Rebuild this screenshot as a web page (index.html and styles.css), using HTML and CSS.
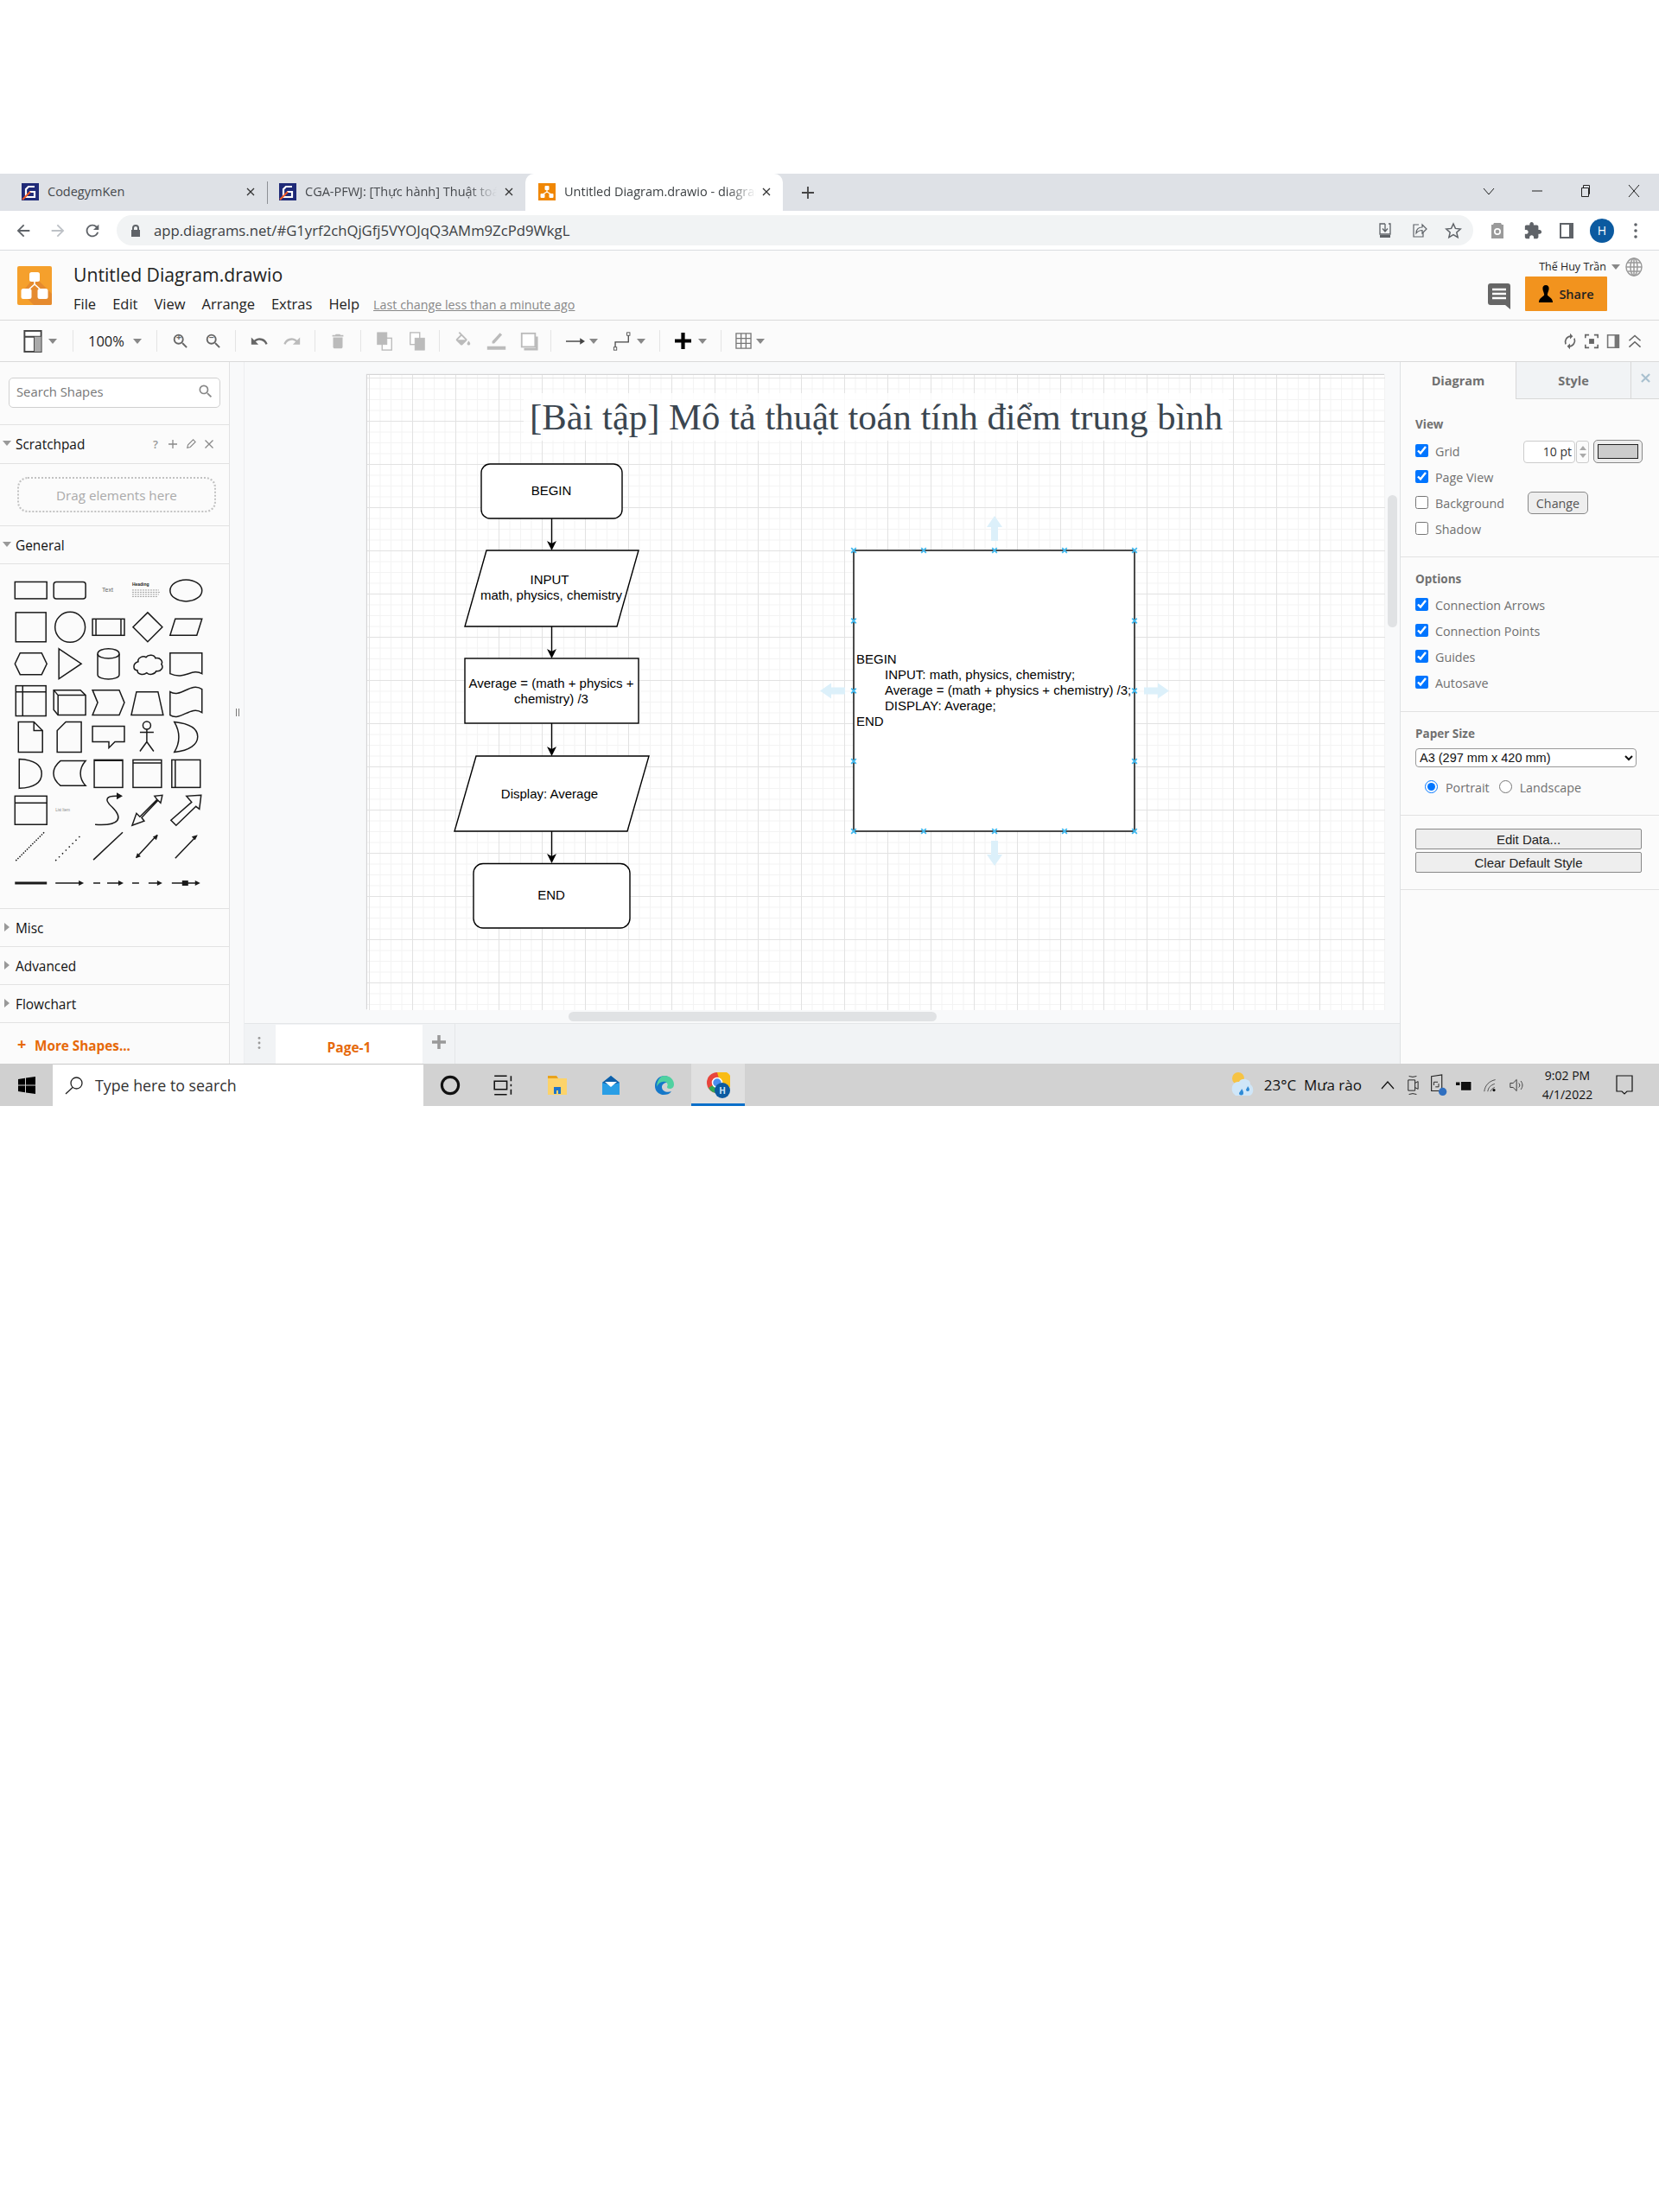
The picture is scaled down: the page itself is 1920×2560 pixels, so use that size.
FILE: index.html
```html
<!DOCTYPE html>
<html lang="vi">
<head>
<meta charset="utf-8">
<title>Untitled Diagram.drawio</title>
<link rel="stylesheet" href="styles.css">
</head>
<body>
<svg class="defs" width="0" height="0">
  <symbol id="i-zoom" viewBox="0 0 24 24"><path d="M15.5 14h-.79l-.28-.27A6.47 6.47 0 0 0 16 9.5 6.5 6.5 0 1 0 9.5 16c1.61 0 3.09-.59 4.23-1.57l.27.28v.79l5 4.99L20.49 19l-4.99-5zm-6 0C7.01 14 5 11.99 5 9.5S7.01 5 9.5 5 14 7.01 14 9.5 11.99 14 9.5 14z"/></symbol>
  <symbol id="i-undo" viewBox="0 0 24 24"><path d="M12.5 8c-2.65 0-5.05.99-6.9 2.6L2 7v9h9l-3.62-3.62c1.39-1.16 3.16-1.88 5.12-1.88 3.54 0 6.55 2.31 7.6 5.5l2.37-.78C21.08 11.03 17.15 8 12.5 8z"/></symbol>
  <symbol id="i-caret" viewBox="0 0 10 6"><path d="M0 0h10L5 6z"/></symbol>
  <symbol id="i-check-x" viewBox="0 0 10 10"><path d="M1.500 1.500l7 7M8.500 1.500l-7 7" stroke="#3fb8ee" stroke-width="2.200" fill="none"/></symbol>
</svg>

<div class="frame">
  <div class="tabstrip">
    <div class="tab">
      <svg class="favicon" viewBox="0 0 20 20"><rect width="20" height="20" fill="#1f2a78"/><path d="M15 4H8L5 7v9h10v-6H9" fill="none" stroke="#fff" stroke-width="2.200"/><path d="M1 19L10 10" stroke="#f05a28" stroke-width="2"/></svg>
      <span class="tab-title">CodegymKen</span>
      <svg class="tab-x" viewBox="0 0 10 10"><path d="M1 1l8 8M9 1l-8 8"/></svg>
    </div>
    <div class="tab tab-sep">
      <svg class="favicon" viewBox="0 0 20 20"><rect width="20" height="20" fill="#1f2a78"/><path d="M15 4H8L5 7v9h10v-6H9" fill="none" stroke="#fff" stroke-width="2.200"/><path d="M1 19L10 10" stroke="#f05a28" stroke-width="2"/></svg>
      <span class="tab-title fade">CGA-PFWJ: [Thực hành] Thuật toán tính điểm</span>
      <svg class="tab-x" viewBox="0 0 10 10"><path d="M1 1l8 8M9 1l-8 8"/></svg>
    </div>
    <div class="tab tab-active">
      <svg class="favicon" viewBox="0 0 20 20"><rect width="20" height="20" fill="#f08705"/><path d="M10 7v3M10 10L5 13M10 10l5 3" stroke="#fff" stroke-width="1.200"/><rect x="7.500" y="3" width="5" height="5" rx="1" fill="#fff"/><rect x="2.500" y="12" width="5" height="5" rx="1" fill="#fff"/><rect x="12.500" y="12" width="5" height="5" rx="1" fill="#fff"/></svg>
      <span class="tab-title fade">Untitled Diagram.drawio - diagrams.net</span>
      <svg class="tab-x" viewBox="0 0 10 10"><path d="M1 1l8 8M9 1l-8 8"/></svg>
    </div>
    <svg class="tab-plus" viewBox="0 0 14 14"><path d="M7 0v14M0 7h14"/></svg>
    <div class="win-controls">
      <svg viewBox="0 0 14 14"><path d="M1 4l6 7 6-7"/></svg>
      <svg viewBox="0 0 14 14"><path d="M1 7h12"/></svg>
      <svg viewBox="0 0 14 14"><path d="M2.500 3.500h8v10h-8zM4.500 3.500v-3h7v10h-1"/></svg>
      <svg viewBox="0 0 14 14"><path d="M1 0l12 14M13 0L1 14"/></svg>
    </div>
  </div>

  <div class="addressbar">
    <div class="nav-btns">
      <svg class="nav" viewBox="0 0 24 24"><path d="M20 11H7.830l5.590-5.590L12 4l-8 8 8 8 1.410-1.410L7.830 13H20v-2z"/></svg>
      <svg class="nav nav-off" viewBox="0 0 24 24"><path d="M4 11h12.170l-5.590-5.590L12 4l8 8-8 8-1.410-1.410L16.170 13H4v-2z"/></svg>
      <svg class="nav" viewBox="0 0 24 24"><path d="M17.650 6.350A7.958 7.958 0 0 0 12 4c-4.420 0-7.990 3.580-7.990 8s3.570 8 7.990 8c3.730 0 6.840-2.550 7.730-6h-2.080A5.990 5.990 0 0 1 12 18c-3.310 0-6-2.690-6-6s2.690-6 6-6c1.660 0 3.140.690 4.220 1.780L13 11h7V4l-2.350 2.350z"/></svg>
    </div>
    <div class="omnibox">
      <svg class="lock" viewBox="0 0 12 14"><path d="M2 6V4a4 4 0 0 1 8 0v2h1v8H1V6zm2 0h4V4a2 2 0 0 0-4 0z"/></svg>
      <span class="url">app.diagrams.net/#G1yrf2chQjGfj5VYOJqQ3AMm9ZcPd9WkgL</span>
      <div class="omni-icons">
        <svg viewBox="0 0 20 20"><path d="M5 2h4M13 2h2v12H3V2h2M9 2v8M6 7.500l3 3.500 3-3.500" fill="none" stroke="#5f6368" stroke-width="1.300"/><path d="M3 15h12v3H3z" fill="#5f6368"/></svg>
        <svg viewBox="0 0 20 20"><path d="M9 3H3v14h11v-5M6 13c0-5 3-7 7-7V3l5 5-5 5V9.500c-3 0-5 1-7 3.500z" fill="none" stroke="#5f6368" stroke-width="1.200"/></svg>
        <svg viewBox="0 0 20 20"><path d="M10 2l2.400 5.400 5.800.6-4.400 3.900 1.300 5.700-5.100-3-5.100 3 1.300-5.700L1.800 8l5.800-.6z" fill="none" stroke="#5f6368" stroke-width="1.500"/></svg>
      </div>
    </div>
    <div class="ext-icons">
      <svg class="ext-cam" viewBox="0 0 20 20"><path d="M6 1h8l1 2h2v16H3V3h2z" fill="#9a9a9a"/><circle cx="10" cy="11" r="4" fill="#fff"/><circle cx="10" cy="11" r="2.300" fill="#9a9a9a"/></svg>
      <svg class="ext-puzzle" viewBox="0 0 24 24"><path d="M20.500 11H19V7c0-1.100-.9-2-2-2h-4V3.500C13 2.120 11.880 1 10.500 1S8 2.120 8 3.500V5H4c-1.100 0-1.990.9-1.990 2v3.800H3.500c1.490 0 2.700 1.210 2.700 2.700s-1.210 2.700-2.700 2.700H2V20c0 1.100.9 2 2 2h3.800v-1.500c0-1.490 1.210-2.700 2.700-2.700 1.490 0 2.700 1.210 2.700 2.700V22H17c1.100 0 2-.9 2-2v-4h1.500c1.380 0 2.500-1.120 2.500-2.500S21.880 11 20.500 11z"/></svg>
      <svg class="ext-panel" viewBox="0 0 18 20"><path d="M1 1h16v18H1zM3 3v14h9V3z" fill-rule="evenodd"/></svg>
      <span class="avatar">H</span>
      <svg class="ext-dots" viewBox="0 0 4 20"><circle cx="2" cy="3" r="1.800"/><circle cx="2" cy="10" r="1.800"/><circle cx="2" cy="17" r="1.800"/></svg>
    </div>
  </div>

  <header class="app-header">
    <svg class="logo" viewBox="0 0 40 45"><rect width="40" height="45" rx="2" fill="#f5a02c"/><path d="M40 43a2 2 0 0 1-2 2H19L5 31l12-15 6-1 17 17z" fill="#e58a2e"/><path d="M20 12v9M20 21l-10 9M20 21l10 9" stroke="#fff" stroke-width="1.600" fill="none"/><rect x="14" y="7" width="12" height="11" rx="2.500" fill="#fff"/><rect x="4.500" y="26" width="12" height="12" rx="2.500" fill="#fff"/><rect x="23.500" y="26" width="12" height="12" rx="2.500" fill="#fff"/></svg>
    <div class="title-block">
      <div class="doc-title">Untitled Diagram.drawio</div>
      <nav class="menu"><span>File</span><span>Edit</span><span>View</span><span>Arrange</span><span>Extras</span><span>Help</span><a class="last-change">Last change less than a minute ago</a></nav>
    </div>
    <div class="user-block">
      <div class="user-row">
        <span class="user-name">Thế Huy Trần</span>
        <svg class="caret user-caret"><use href="#i-caret"/></svg>
        <svg class="globe" viewBox="0 0 20 22"><g fill="none" stroke="#9a9a9a" stroke-width="1.500"><ellipse cx="10" cy="11" rx="9" ry="10"/><ellipse cx="10" cy="11" rx="4" ry="10"/><path d="M10 1v20M1 11h18M2.500 6h15M2.500 16h15"/></g></svg>
      </div>
      <div class="share-row">
        <svg class="comment" viewBox="0 0 26 30"><path d="M3 0h20a3 3 0 0 1 3 3v27l-6-5H3a3 3 0 0 1-3-3V3a3 3 0 0 1 3-3z" fill="#666"/><path d="M5 7h16M5 12h16M5 17h16" stroke="#fff" stroke-width="2.500"/></svg>
        <button class="share"><svg viewBox="0 0 20 24"><path d="M10 1c3 0 4 2 4 4 0 3-1.500 5-2 8 0 2 7 4 7 10H1c0-6 7-8 7-10-.5-3-2-5-2-8 0-2 1-4 4-4z"/></svg>Share</button>
      </div>
    </div>
  </header>

  <div class="toolbar">
    <div class="tb-group g1"><svg class="ic-format" viewBox="0 0 22 27"><rect x="1" y="1" width="20" height="25" fill="#fff" stroke="#444" stroke-width="2"/><path d="M1 8h20M13 8v18" stroke="#444" stroke-width="2"/><rect x="13" y="8" width="8" height="18" fill="#aaa"/></svg><svg class="caret"><use href="#i-caret"/></svg></div>
    <div class="tb-group g2"><span class="zoom-val">100%</span><svg class="caret"><use href="#i-caret"/></svg></div>
    <div class="tb-group g3">
      <span class="slot"><svg class="ic mid"><use href="#i-zoom"/></svg><i class="zp">+</i></span>
      <span class="slot"><svg class="ic mid"><use href="#i-zoom"/></svg><i class="zp">−</i></span>
    </div>
    <div class="tb-group g3b">
      <span class="slot"><svg class="ic mid"><use href="#i-undo"/></svg></span>
      <span class="slot"><svg class="ic off flip"><use href="#i-undo"/></svg></span>
    </div>
    <div class="tb-group g4"><svg class="ic off" viewBox="0 0 24 24"><path d="M6 19c0 1.100.9 2 2 2h8c1.100 0 2-.9 2-2V7H6v12zM19 4h-3.500l-1-1h-5l-1 1H5v2h14V4z"/></svg></div>
    <div class="tb-group g5">
      <span class="slot"><svg class="ic" viewBox="0 0 22 24"><rect x="8" y="8" width="12" height="15" fill="#fff" stroke="#bbb" stroke-width="1.500"/><rect x="2" y="1" width="12" height="15" fill="#bbb" stroke="#bbb"/></svg></span>
      <span class="slot"><svg class="ic" viewBox="0 0 22 24"><rect x="2" y="1" width="12" height="15" fill="#fff" stroke="#bbb" stroke-width="1.500"/><rect x="8" y="8" width="12" height="15" fill="#bbb" stroke="#bbb"/></svg></span>
    </div>
    <div class="tb-group g6">
      <span class="slot"><svg class="ic off" viewBox="0 0 24 24"><path d="M16.560 8.940L7.620 0 6.210 1.410l2.380 2.380-5.150 5.150c-.59.59-.59 1.540 0 2.120l5.500 5.500c.29.29.68.44 1.060.44s.77-.15 1.060-.44l5.500-5.500c.59-.58.59-1.530 0-2.120zM5.210 10L10 5.210 14.790 10H5.210zM19 11.500s-2 2.170-2 3.500c0 1.100.9 2 2 2s2-.9 2-2c0-1.330-2-3.500-2-3.500z"/></svg></span>
      <span class="slot"><svg class="ic ic-wide" viewBox="0 0 28 24"><path d="M19 0l3 3L11 15H8v-3zM1 19h26v5H1z" fill="#bbb"/></svg></span>
      <span class="slot"><svg class="ic" viewBox="0 0 24 24"><rect x="3" y="2" width="17" height="17" fill="#fff" stroke="#bbb" stroke-width="2"/><path d="M6 22h16V6" fill="none" stroke="#bbb" stroke-width="3"/></svg></span>
    </div>
    <div class="tb-group g7">
      <span class="pair"><svg class="ic ic-wide" viewBox="0 0 24 14"><path d="M1 7h18" stroke="#444" stroke-width="1.500"/><path d="M24 7l-6-4v8z" fill="#444"/></svg><svg class="caret"><use href="#i-caret"/></svg></span>
      <span class="pair"><svg class="ic ic-wide" viewBox="0 0 24 26"><path d="M2 23v-9h18V3" fill="none" stroke="#444" stroke-width="1.500"/><rect x="18" y="1" width="4" height="4" fill="#fff" stroke="#444"/><rect x="0" y="21" width="4" height="4" fill="#fff" stroke="#444"/></svg><svg class="caret"><use href="#i-caret"/></svg></span>
    </div>
    <div class="tb-group g8"><span class="pair pair-plus"><svg class="ic ic-s" viewBox="0 0 18 18"><path d="M9 0v18M0 9h18" stroke="#000" stroke-width="4"/></svg><svg class="caret"><use href="#i-caret"/></svg></span></div>
    <div class="tb-group g9"><span class="pair"><svg class="ic ic-s" viewBox="0 0 20 20"><path d="M1 1h18v18H1zM7 1v18M13 1v18M1 7h18M1 13h18" fill="none" stroke="#777" stroke-width="1.400"/></svg><svg class="caret"><use href="#i-caret"/></svg></span></div>
    <div class="tb-right">
      <svg viewBox="0 0 18 24"><g fill="none" stroke="#666" stroke-width="2"><path d="M3 16a8 8 0 0 1 7-11M15 8a8 8 0 0 1-7 11"/></g><path d="M9 1l4 4-4 4zM9 23l-4-4 4-4z" fill="#666"/></svg>
      <svg viewBox="0 0 22 24"><path d="M1 7V2h6M15 2h6v5M21 17v5h-6M7 22H1v-5" fill="none" stroke="#666" stroke-width="2.400"/><rect x="7" y="8" width="8" height="8" fill="#666"/></svg>
      <svg viewBox="0 0 20 24"><path d="M1 2h18v20H1zM3 4v16h9V4z" fill="#777" fill-rule="evenodd"/></svg>
      <svg viewBox="0 0 22 24"><path d="M2 11l9-8 9 8M2 21l9-8 9 8" fill="none" stroke="#666" stroke-width="2.200"/></svg>
    </div>
  </div>

  <div class="workspace">
    <aside class="sidebar">
      <div class="search-wrap">
        <div class="search"><span>Search Shapes</span><svg class="ic-search" viewBox="0 0 24 24"><path d="M15.500 14h-.79l-.28-.27A6.470 6.470 0 0 0 16 9.500 6.500 6.500 0 1 0 9.500 16c1.610 0 3.090-.59 4.230-1.570l.27.28v.79l5 4.990L20.490 19l-4.990-5zm-6 0C7.010 14 5 11.990 5 9.500S7.010 5 9.500 5 14 7.010 14 9.500 11.990 14 9.500 14z"/></svg></div>
      </div>
      <div class="sec-head sec-tall">
        <span class="tri-down"></span><span class="sec-name">Scratchpad</span>
        <span class="sec-tools"><b class="q">?</b>
          <svg viewBox="0 0 12 12"><path d="M6 1v10M1 6h10"/></svg>
          <svg viewBox="0 0 14 14"><path d="M2 12l1-4 7-7 3 3-7 7z"/></svg>
          <svg viewBox="0 0 12 12"><path d="M1.500 1.500l9 9M10.500 1.500l-9 9"/></svg>
        </span>
      </div>
      <div class="drag-wrap"><div class="drag-zone">Drag elements here</div></div>
      <div class="sec-head"><span class="tri-down"></span><span class="sec-name">General</span></div>
      <svg class="shapes" viewBox="0 652 265 399">
        <g class="sh">
          <rect x="17" y="672.500" width="37" height="19.500"/>
          <rect x="62" y="672.500" width="37" height="19.500" rx="3"/>
          <ellipse cx="215.500" cy="682.500" rx="18.500" ry="12.500"/>
          <rect x="18" y="708" width="35" height="34"/>
          <circle cx="81" cy="725" r="17.500"/>
          <rect x="107" y="715.500" width="37" height="19"/><path d="M111 715.500v19M140 715.500v19"/>
          <path d="M171 708l17 17-17 17-17-17z"/>
          <path d="M203 715.500h31l-6 19h-31z"/>
          <path d="M17 767.500l6-12.500h25l6 12.500-6 12.500H23z"/>
          <path d="M68 750l26 17.500L68 785z"/>
          <path d="M113 756c0-8 25-8 25 0v24c0 7-25 7-25 0z"/><path d="M113 756c0 7 25 7 25 0"/>
          <path d="M160 765c-1-5 6-7 9-5 3-4 10-3 11 1 6-1 9 4 7 7 3 4-1 9-6 8-2 4-8 5-11 2-4 3-11 2-11-3-5 0-6-8 1-10z"/>
          <path d="M197 755h37v24c-12-7-20 8-37 0z"/>
          <rect x="18" y="793" width="35" height="35"/><path d="M18 800h35M26 793v35"/>
          <path d="M62 798h31l6 6v23H67l-5-6z" /><path d="M62 798l5 6h32M67 804v23"/>
          <path d="M107 798h31l6 14.500-6 14.500h-31l6-14.500z"/>
          <path d="M158 800h25l6 27h-37z"/>
          <path d="M197 800c12 8 24-12 37-3v27c-13-9-25 11-37 3z"/>
          <path d="M21 835h18l10 10v25H21z"/><path d="M39 835v10h10"/>
          <path d="M76 835h18v35H66v-25z"/>
          <path d="M107 840h37v18h-11l-7 7v-7h-19z"/>
          <circle cx="170" cy="839" r="4.500"/><path d="M170 843.500V858M162 847h16M170 858l-8 11M170 858l8 11"/>
          <path d="M202 835c18 2 27 8 27 17s-9 16-27 18c7-12 7-23 0-35z"/>
          <path d="M22 878c17 1 26 7 26 17s-9 16-26 17z"/>
          <path d="M70 880h29c-8 9-8 20 0 29H70c-11-9-11-20 0-29z"/>
          <rect x="109" y="879" width="33" height="32"/><path d="M109 879.500h33" stroke-width="2"/>
          <rect x="154" y="879" width="33" height="32"/><path d="M154 882.500h33"/>
          <rect x="199" y="879" width="33" height="32"/><path d="M203 879v32"/>
          <rect x="17" y="921" width="37" height="33"/><path d="M17 929h37"/>
          <path d="M110 954c30 2 32-8 20-20-10-9-8-14 8-13"/>
          <path d="M153 955l5-14 4 4 20-20-3-4 9-1-2 9-3-3-19 20 3 4z"/>
          <polygon points="233,920 216,921 222,928 198,949 204,955 227,933 231,936"/>
          <path d="M18 996l33-33" stroke-dasharray="1.500 1.500"/>
          <path d="M64 996l31-31" stroke-dasharray="1.500 4"/>
          <path d="M108 995l34-32"/>
          <path d="M158 992l24-26M203 993l24-25"/>
          <path d="M64 1022h28M108 1022h8M124 1022h16M153 1022h8M172 1022h12M199 1022h28"/>
          <path d="M17 1022h37" stroke-width="3"/>
        </g>
        <g class="sh-fill">
          <path d="M142 921l-7-4v8zM157 993l6-2-4-4zM183 966l-6 2 4 4zM229 966l-7 2 4 4zM97 1022l-6-3v6zM143 1022l-6-3v6zM188 1022l-6-3v6zM232 1022l-6-3v6z"/>
          <rect x="211" y="1019" width="7" height="6"/>
        </g>
        <text class="sh-text" x="118" y="684">Text</text>
        <text class="sh-head" x="153" y="677">Heading</text>
        <path class="sh-lines" d="M153 682h31M153 684.500h32M153 687h31M153 689.500h30"/>
        <text class="sh-tiny" x="64" y="939">List Item</text>
      </svg>
      <div class="sec-head"><span class="tri-right"></span><span class="sec-name">Misc</span></div>
      <div class="sec-head"><span class="tri-right"></span><span class="sec-name">Advanced</span></div>
      <div class="sec-head"><span class="tri-right"></span><span class="sec-name">Flowchart</span></div>
      <div class="more"><span class="more-plus">+</span>More Shapes...</div>
    </aside>
    <div class="gutter"><i></i></div>
    <main class="canvas-col">
      <div class="canvas">
        <div class="page">
          <svg class="diagram" viewBox="425 433 1178 735">
            <rect class="title-bg" x="606" y="454" width="816" height="55"/>
            <text class="d-title" x="1014" y="496">[Bài tập] Mô tả thuật toán tính điểm trung bình</text>
            <g class="node">
              <rect x="557" y="536" width="163" height="63" rx="10"/>
              <path d="M563 636h176l-25 88H538z"/>
              <rect x="538" y="761" width="201" height="75"/>
              <path d="M551 874h200l-25 87H526z"/>
              <rect x="548" y="998.500" width="181" height="74.500" rx="11"/>
              <rect x="988" y="636" width="325" height="325"/>
            </g>
            <g class="edge">
              <path d="M638.500 599v30M638.500 724v30M638.500 836v31M638.500 961v30"/>
            </g>
            <g class="head">
              <path d="M638.500 636l-5.500-11 5.500 3 5.500-3zM638.500 761l-5.500-11 5.500 3 5.500-3zM638.500 874l-5.500-11 5.500 3 5.500-3zM638.500 998l-5.500-11 5.500 3 5.500-3z"/>
            </g>
            <text class="label" x="638" y="572">BEGIN</text>
            <text class="label" x="636" y="675">INPUT</text>
            <text class="label" x="638" y="693">math, physics, chemistry</text>
            <text class="label" x="638" y="795">Average = (math + physics +</text>
            <text class="label" x="638" y="813">chemistry) /3</text>
            <text class="label" x="636" y="923">Display: Average</text>
            <text class="label" x="638" y="1040">END</text>
            <text class="code" x="991" y="767">BEGIN</text>
            <text class="code" x="1024" y="785">INPUT: math, physics, chemistry;</text>
            <text class="code" x="1024" y="803">Average = (math + physics + chemistry) /3;</text>
            <text class="code" x="1024" y="821">DISPLAY: Average;</text>
            <text class="code" x="991" y="839">END</text>
            <g class="hint">
              <path d="M1151 596l9 13h-5v16h-8v-16h-5zM1151 1001l9-13h-5v-16h-8v16h-5zM949 798.500l13-9v5h16v8h-16v5zM1353 798.500l-13-9v5h-16v8h16v5z"/>
            </g>
            <g class="handles">
              <use href="#i-check-x" x="984" y="632" width="8" height="8"/><use href="#i-check-x" x="1065" y="632" width="8" height="8"/><use href="#i-check-x" x="1147" y="632" width="8" height="8"/><use href="#i-check-x" x="1228" y="632" width="8" height="8"/><use href="#i-check-x" x="1309" y="632" width="8" height="8"/>
              <use href="#i-check-x" x="984" y="713.500" width="8" height="8"/><use href="#i-check-x" x="1309" y="713.500" width="8" height="8"/>
              <use href="#i-check-x" x="984" y="794.500" width="8" height="8"/><use href="#i-check-x" x="1309" y="794.500" width="8" height="8"/>
              <use href="#i-check-x" x="984" y="876" width="8" height="8"/><use href="#i-check-x" x="1309" y="876" width="8" height="8"/>
              <use href="#i-check-x" x="984" y="957" width="8" height="8"/><use href="#i-check-x" x="1065" y="957" width="8" height="8"/><use href="#i-check-x" x="1147" y="957" width="8" height="8"/><use href="#i-check-x" x="1228" y="957" width="8" height="8"/><use href="#i-check-x" x="1309" y="957" width="8" height="8"/>
            </g>
          </svg>
        </div>
        <div class="vscroll"></div>
        <div class="hscroll"></div>
      </div>
      <div class="pagebar">
        <svg class="page-dots" viewBox="0 0 4 20"><circle cx="2" cy="3" r="1.800"/><circle cx="2" cy="10" r="1.800"/><circle cx="2" cy="17" r="1.800"/></svg>
        <div class="page-tab">Page-1</div>
        <div class="page-add"><svg viewBox="0 0 16 16"><path d="M8 0v16M0 8h16"/></svg></div>
      </div>
    </main>
    <aside class="panel">
      <div class="panel-tabs">
        <div class="ptab ptab-on">Diagram</div>
        <div class="ptab">Style</div>
        <div class="ptab ptab-x"><svg viewBox="0 0 12 12"><path d="M1 1l10 10M11 1L1 11"/></svg></div>
      </div>
      <section class="psec sec-view">
        <h4>View</h4>
        <div class="prow"><input type="checkbox" checked><label>Grid</label>
          <div class="grid-ctl"><span class="pt-input">10 pt</span>
            <span class="spinner"><svg viewBox="0 0 10 6"><path d="M0 6h10L5 0z"/></svg><svg viewBox="0 0 10 6"><path d="M0 0h10L5 6z"/></svg></span>
            <span class="swatch-btn"><span class="swatch"></span></span></div></div>
        <div class="prow"><input type="checkbox" checked><label>Page View</label></div>
        <div class="prow"><input type="checkbox"><label>Background</label><button class="change">Change</button></div>
        <div class="prow"><input type="checkbox"><label>Shadow</label></div>
      </section>
      <section class="psec sec-opts">
        <h4>Options</h4>
        <div class="prow"><input type="checkbox" checked><label>Connection Arrows</label></div>
        <div class="prow"><input type="checkbox" checked><label>Connection Points</label></div>
        <div class="prow"><input type="checkbox" checked><label>Guides</label></div>
        <div class="prow"><input type="checkbox" checked><label>Autosave</label></div>
      </section>
      <section class="psec sec-paper">
        <h4>Paper Size</h4>
        <select class="paper"><option>A3 (297 mm x 420 mm)</option></select>
        <div class="radios"><input type="radio" name="o" checked><label>Portrait</label><input type="radio" name="o"><label>Landscape</label></div>
      </section>
      <section class="psec sec-btns">
        <button class="wide">Edit Data...</button>
        <button class="wide">Clear Default Style</button>
      </section>
    </aside>
  </div>

  <footer class="taskbar">
    <div class="start"><svg viewBox="0 0 20 20"><path d="M0 3l8-1.200V9.500H0zM9 1.600L20 0v9.500H9zM0 10.500h8v7.700L0 17zM9 10.500h11V20L9 18.400z"/></svg></div>
    <div class="tsearch">
      <svg viewBox="0 0 22 22"><circle cx="13.500" cy="8.500" r="6.500" fill="none" stroke="#222" stroke-width="1.300"/><path d="M9 13.500L1 21" stroke="#222" stroke-width="1.300"/></svg>
      <span>Type here to search</span>
    </div>
    <div class="tslot"><svg viewBox="0 0 20 20"><circle cx="10" cy="10" r="8" fill="none" stroke="#111" stroke-width="2.600"/></svg></div>
    <div class="tslot"><svg viewBox="0 0 20 20"><path d="M1 1h12M1 19h12M1 6h12v8H1zM17 1v5M17 9v2M17 14v5" fill="none" stroke="#111" stroke-width="1.300"/></svg></div>
    <div class="tslot"><svg viewBox="0 0 24 24"><path d="M1 1h10l2 3h10v19H1z" fill="#fcd36a"/><path d="M1 1h10l2 3H1z" fill="#e9a21c"/><path d="M8 22v-8h8v8h-3v-4h-2v4z" fill="#1e74c9"/></svg></div>
    <div class="tslot"><svg viewBox="0 0 24 24"><path d="M2 9l10-8 10 8v14H2z" fill="#2a9ee5"/><path d="M2 9l10-8 10 8-10 3z" fill="#0f5fa8"/><path d="M5 8h14l-7 6z" fill="#fff"/></svg></div>
    <div class="tslot"><svg viewBox="0 0 24 24"><path d="M22 13c0-7-4-12-10-12C6 1 1 6 1 13c0 6 5 10 10 10 4 0 7-1 9-4-5 2-11 0-11-5 0-3 3-5 6-5s4 2 3 4z" fill="#1578c9"/><path d="M12 1c6 0 11 4 11 10 0 3-2 5-5 5-2 0-3-1-3-2 2-4-1-7-5-6-3 0-6 3-7 6 0-7 4-13 9-13z" fill="#4fd1a0"/></svg></div>
    <div class="tslot tslot-on"><svg viewBox="0 0 28 32"><circle cx="13" cy="13" r="12" fill="#e8453c"/><path d="M13 13L3 19a12 12 0 0 0 10 6z" fill="#34a853"/><path d="M13 1h11a12 12 0 0 1-5 22z" fill="#f9bc15"/><circle cx="13" cy="13" r="5.500" fill="#4a8df0" stroke="#fff" stroke-width="1.500"/><circle cx="19" cy="22" r="9" fill="#0b5aa0"/><text class="chrome-h" x="19" y="26">H</text></svg></div>
    <div class="tray">
      <svg class="t-weather" viewBox="0 0 27 34"><circle cx="9" cy="9" r="7" fill="#f6c344"/><path d="M3 26c-4-8 2-14 7-13 3-6 14-3 13 3 5 3 4 12-1 13H6z" fill="#cfe6f8"/><path d="M10 26c2-3 3-4 3-5 1 1 2 3 2 5a2.500 2.500 0 0 1-5 0zM18 22c1-2 2-3 2-4 1 1 2 3 2 4a2 2 0 0 1-4 0z" fill="#2f8bd6"/></svg>
      <span class="t-weather-txt">23°C&nbsp; Mưa rào</span>
      <svg class="t-up" viewBox="0 0 16 10"><path d="M1 9l7-8 7 8"/></svg>
      <svg class="t-ic" viewBox="0 0 16 26"><path d="M3 1c2 0 3 1 5 1s3-1 5-1M3 25c2 0 3-1 5-1s3 1 5 1M2 6h9v14H2zM11 10l4-2v10l-4-2" fill="none" stroke="#111"/></svg>
      <svg class="t-ic t-ic2" viewBox="0 0 20 28"><path d="M1 3l13-2v20H1z" fill="none" stroke="#222" stroke-width="1.200"/><path d="M4 14v-4h5M10 12v4H6" fill="none" stroke="#222"/><circle cx="15" cy="22" r="5" fill="#2f6fc0"/></svg>
      <svg class="t-ic t-ic3" viewBox="0 0 22 20"><path d="M2 1v5M5 1v5M1 6h5v4H1zM7 5h14v12H7z" fill="#111"/><path d="M7 5h14v12H7z" fill="none" stroke="#eee"/></svg>
      <svg class="t-ic t-ic4" viewBox="0 0 22 20"><g fill="none" stroke="#333"><path d="M2 19C3 10 9 4 18 2M7 19c1-6 4-9 10-11M11 19c1-3 2-4 6-6"/></g><circle cx="16" cy="17" r="2" fill="#111"/></svg>
      <svg class="t-ic t-ic5" viewBox="0 0 22 22"><path d="M1 8h4l5-5v16l-5-5H1zM13 8c2 2 2 4 0 6M16 5c3 4 3 8 0 12" fill="none" stroke="#222"/></svg>
      <div class="clock"><span>9:02 PM</span><span>4/1/2022</span></div>
      <svg class="t-note" viewBox="0 0 20 24"><path d="M1 1h18v18h-6l-3 3-3-3H1z" fill="none" stroke="#111" stroke-width="1.200"/></svg>
    </div>
  </footer>
</div>
</body>
</html>
```
FILE: styles.css
```css
* { box-sizing: border-box; }
html, body { margin: 0; padding: 0; background: #fff; }
body { font-family: "Open Sans", "Noto Sans", sans-serif; color: #222; height: 2560px; }
.defs { position: absolute; }
.frame { margin-top: 201px; height: 1079px; display: flex; flex-direction: column; width: 1920px; overflow: hidden; }

/* Chrome tab strip */
.tabstrip { height: 43px; background: #dee1e6; display: flex; align-items: center; flex: none; }
.tab { width: 309px; height: 43px; display: flex; align-items: center; padding: 0 0 2px 25px; position: relative; font-size: 14.500px; color: #45484c; flex: none; }
.tab.tab-sep { width: 299px; padding-left: 14px; }
.tab-sep::before { content: ""; position: absolute; left: 0; top: 9px; bottom: 8px; width: 1px; background: #8d9095; }
.tab-active { width: 298px; padding-left: 15px; background: #fff; border-radius: 10px 10px 0 0; color: #3c4043; }
.favicon { width: 20px; height: 20px; flex: none; }
.tab-title { margin-left: 10px; white-space: nowrap; overflow: hidden; width: 222px; }
.fade { -webkit-mask-image: linear-gradient(90deg, #000 85%, transparent); mask-image: linear-gradient(90deg, #000 85%, transparent); }
.tab-x { width: 10px; height: 10px; position: absolute; right: 14px; top: 16px; fill: none; stroke: #333; stroke-width: 1.300; }
.tab-plus { width: 14px; height: 14px; margin-left: 22px; fill: none; stroke: #444; stroke-width: 1.800; }
.win-controls { margin-left: auto; display: flex; align-items: center; gap: 42px; padding: 0 22px 4px 0; }
.win-controls svg { width: 14px; height: 14px; fill: none; stroke: #222; stroke-width: 1; }

/* Chrome address bar */
.addressbar { height: 46px; background: #fff; display: flex; align-items: flex-start; border-bottom: 1px solid #dadce0; padding-top: 5px; flex: none; }
.nav-btns { width: 135px; height: 35px; display: flex; align-items: center; padding-left: 16px; gap: 18px; flex: none; }
.nav { width: 22px; height: 22px; fill: #5f6368; }
.nav-off { fill: #bdc1c6; }
.omnibox { width: 1570px; height: 35px; background: #f1f3f4; border-radius: 18px; display: flex; align-items: center; padding-left: 16px; flex: none; }
.lock { width: 12px; height: 14px; fill: #5f6368; flex: none; }
.url { margin-left: 15px; font-size: 16.700px; color: #3c4043; white-space: nowrap; }
.omni-icons { margin-left: auto; display: flex; gap: 19px; padding-right: 13px; }
.omni-icons svg { width: 20px; height: 20px; }
.ext-icons { display: flex; align-items: center; height: 35px; flex: 1; padding-left: 18px; }
.ext-cam { width: 20px; height: 20px; }
.ext-puzzle { width: 22px; height: 22px; fill: #5f6368; margin-left: 20px; }
.ext-panel { width: 18px; height: 20px; fill: #5f6368; margin-left: 19px; }
.avatar { width: 28px; height: 28px; border-radius: 50%; background: #0b5aa0; color: #fff; font-size: 14px; display: flex; align-items: center; justify-content: center; margin-left: 18px; }
.ext-dots { width: 4px; height: 20px; fill: #5f6368; margin-left: 23px; }

/* App header */
.app-header { height: 81px; background: #fbfbfb; border-bottom: 1px solid #dadada; display: flex; padding: 18px 19px 0 20px; position: relative; flex: none; }
.logo { width: 40px; height: 45px; flex: none; }
.title-block { margin-left: 25px; margin-top: -9px; }
.doc-title { font-size: 21.200px; line-height: 38px; color: #222; white-space: nowrap; }
.menu { display: flex; align-items: baseline; font-size: 16.500px; line-height: 26px; gap: 19px; margin-top: 2px; color: #222; }
.last-change { font-size: 14.300px; color: #888; text-decoration: underline; margin-left: -3px; }
.user-block { margin-left: auto; margin-top: -12px; display: flex; flex-direction: column; align-items: flex-end; }
.user-row { display: flex; align-items: center; height: 25px; }
.user-name { font-size: 12.500px; color: #222; }
.caret { width: 10px; height: 6px; fill: #888; flex: none; }
.user-caret { margin-left: 6px; margin-right: 6px; }
.globe { width: 20px; height: 22px; }
.share-row { display: flex; align-items: flex-start; margin-top: -1px; padding-right: 41px; }
.comment { width: 26px; height: 30px; margin-top: 8px; margin-right: 17px; }
.share { width: 95px; height: 40px; background: #f2931e; border: 0; border-radius: 1px; font: 600 14.500px "Open Sans", sans-serif; color: #222; display: flex; align-items: center; justify-content: center; gap: 6px; padding: 0; }
.share svg { width: 18px; height: 22px; fill: #000; }

/* drawio toolbar */
.toolbar { height: 48px; background: #fbfbfb; border-bottom: 1px solid #dadada; display: flex; align-items: center; flex: none; }
.tb-group { height: 25px; display: flex; align-items: center; justify-content: center; border-right: 1px solid #e4e4e4; flex: none; }
.g1 { width: 85px; gap: 7px; padding-left: 27px; justify-content: flex-start; }
.g2 { width: 97px; gap: 10px; padding-left: 17px; justify-content: flex-start; }
.g3 { width: 91px; padding-left: 2px; }
.g3b { width: 92px; }
.g4 { width: 53px; }
.g5 { width: 91px; padding-left: 2px; }
.g6 { width: 129px; padding-left: 2px; }
.g7 { width: 126px; gap: 17px; padding-left: 16px; justify-content: flex-start; }
.g8 { width: 71px; padding-left: 17px; justify-content: flex-start; }
.g9 { width: 80px; border-right: 0; padding-left: 16px; justify-content: flex-start; }
.ic-format { width: 22px; height: 26px; }
.zoom-val { font-size: 16.500px; color: #222; }
.slot { width: 38px; display: flex; justify-content: center; position: relative; }
.ic { width: 22px; height: 22px; fill: #bbb; flex: none; }
.ic.mid { fill: #666; }
.ic.off { fill: #bbb; }
.flip { transform: scaleX(-1); }
.ic-wide { width: 23px; }
.ic-s { width: 19px; height: 19px; }
.zp { position: absolute; left: 11px; top: 1px; width: 12px; font: 700 10px/12px "Liberation Sans", sans-serif; color: #666; text-align: center; }
.pair { display: flex; align-items: center; gap: 5px; }
.pair-plus { gap: 8px; }
.tb-right { margin-left: auto; display: flex; align-items: center; gap: 9px; padding-right: 20px; }
.tb-right svg { width: 16px; height: 20px; }

/* Workspace */
.workspace { height: 812px; display: flex; flex: none; }
.sidebar { width: 266px; background: #fbfbfb; border-right: 1px solid #e2e2e2; flex: none; display: flex; flex-direction: column; }
.search-wrap { height: 73px; padding: 18px 10px 0; border-bottom: 1px solid #e2e2e2; flex: none; }
.search { height: 35px; background: #fff; border: 1px solid #d0d0d0; border-radius: 5px; display: flex; align-items: center; justify-content: space-between; padding: 0 6px 3px 8px; font-size: 14.800px; color: #777; }
.ic-search { width: 20px; height: 20px; fill: #888; }
.sec-head { height: 44px; display: flex; align-items: center; border-bottom: 1px solid #e2e2e2; position: relative; padding: 2px 0 0 18px; flex: none; }
.sec-tall { height: 45px; padding-top: 0; }
.sec-name { font-size: 15.400px; font-weight: 500; color: #111; }
.tri-down { position: absolute; left: 3px; top: 18px; width: 0; height: 0; border: 5px solid transparent; border-top: 6px solid #999; border-bottom: 0; }
.tri-right { position: absolute; left: 5px; top: 16px; width: 0; height: 0; border: 5px solid transparent; border-left: 6px solid #999; border-right: 0; }
.sec-tools { margin-left: auto; display: flex; align-items: center; gap: 9px; padding-right: 17px; }
.sec-tools svg { width: 12px; height: 12px; fill: none; stroke: #888; stroke-width: 1.300; }
.q { font-size: 13px; color: #999; font-weight: 600; margin-right: 2px; }
.drag-wrap { height: 72px; padding: 15px 15px 0 20px; border-bottom: 1px solid #e2e2e2; flex: none; }
.drag-zone { height: 41px; border: 2px dotted #c2c2c2; border-radius: 12px; display: flex; align-items: center; justify-content: center; font-size: 15.200px; color: #aaa; }
.shapes { width: 265px; height: 399px; border-bottom: 1px solid #e2e2e2; flex: none; display: block; }
.sh { fill: none; stroke: #1a1a1a; stroke-width: 1.500; }
.sh-fill { fill: #1a1a1a; }
.sh-text { font: 7px "Liberation Sans", sans-serif; fill: #666; }
.sh-head { font: 700 5px "Liberation Sans", sans-serif; fill: #222; }
.sh-lines { stroke: #888; stroke-width: 0.800; stroke-dasharray: 2 1; }
.sh-tiny { font: 4.500px "Liberation Sans", sans-serif; fill: #888; }
.more { flex: 1; display: flex; align-items: center; padding: 4px 0 0 20px; font-size: 15.300px; font-weight: 700; color: #e6690a; }
.more-plus { width: 20px; font-size: 18px; line-height: 1; margin-top: -4px; }

.gutter { width: 17px; background: #f8f9fa; border-right: 1px solid #eceef0; flex: none; position: relative; }
.gutter i { position: absolute; left: 7px; top: 401px; width: 4px; height: 9px; border-left: 1px solid #777; border-right: 1px solid #777; }
.canvas-col { width: 1337px; display: flex; flex-direction: column; flex: none; }
.canvas { height: 766px; background: #f8f9fa; position: relative; overflow: hidden; border-bottom: 1px solid #e4e6e8; flex: none; }
.page { position: absolute; left: 142px; top: 15px; width: 1178px; height: 735px; background-color: #fff;
  box-shadow: -1px -1px 1px rgba(0,0,0,.14);
  background-image:
    linear-gradient(#e2e2e2 1px, transparent 1px),
    linear-gradient(90deg, #e2e2e2 1px, transparent 1px),
    linear-gradient(#f3f3f3 1px, transparent 1px),
    linear-gradient(90deg, #f3f3f3 1px, transparent 1px);
  background-size: 50px 50px, 50px 50px, 12.500px 12.500px, 12.500px 12.500px;
  background-position: 0 3px, 2px 0, 0 3px, 2px 0; }
.diagram { position: absolute; inset: 0; width: 100%; height: 100%; }
.title-bg { fill: #fff; opacity: .8; }
.d-title { font: 42.670px "Liberation Serif", serif; fill: #3b4650; text-anchor: middle; }
.node { fill: #fff; stroke: #000; stroke-width: 1.400; }
.edge { fill: none; stroke: #000; stroke-width: 1.400; }
.head { fill: #000; }
.label { font: 15px "Liberation Sans", sans-serif; fill: #000; text-anchor: middle; }
.code { font: 15px "Liberation Sans", sans-serif; fill: #000; }
.hint { fill: #dcf0fa; }
.vscroll { position: absolute; left: 1323px; top: 154px; width: 11px; height: 153px; background: #e0e2e4; border-radius: 6px; }
.hscroll { position: absolute; left: 375px; top: 752px; width: 426px; height: 11px; background: #e0e2e4; border-radius: 6px; }
.pagebar { flex: 1; background: #f1f3f5; display: flex; align-items: stretch; }
.page-dots { width: 4px; height: 16px; fill: #999; margin: 14px 17px 0 15px; flex: none; }
.page-tab { width: 170px; margin-top: 1px; background: #fff; color: #e6690a; font-size: 15.500px; font-weight: 700; display: flex; align-items: center; justify-content: center; padding-top: 6px; }
.page-add { width: 38px; border-right: 1px solid #e4e6e8; display: flex; align-items: center; justify-content: center; padding-bottom: 4px; }
.page-add svg { width: 16px; height: 16px; fill: none; stroke: #999; stroke-width: 3.500; }

/* Right format panel */
.panel { flex: 1; background: #fbfbfb; border-left: 1px solid #dfe1e3; color: #707070; }
.panel-tabs { height: 43px; display: flex; }
.ptab { width: 133px; background: #f1f3f5; border-bottom: 1px solid #d8d8d8; border-left: 1px solid #d8d8d8; display: flex; align-items: center; justify-content: center; font-size: 14.500px; font-weight: 700; color: #707070; flex: none; }
.ptab-on { background: #fbfbfb; border: 0; }
.ptab-x { width: 33px; padding-bottom: 6px; }
.ptab-x svg { width: 11px; height: 11px; fill: none; stroke: #a9c0cf; stroke-width: 2.400; flex: none; }
.psec { padding-left: 17px; border-bottom: 1px solid #e2e2e2; }
.psec h4 { margin: 0; font-size: 13.500px; line-height: 18px; font-weight: 700; color: #707070; }
.sec-view { height: 183px; padding-top: 20px; }
.sec-view h4 { margin-bottom: 8px; }
.sec-opts { height: 179px; padding-top: 16px; }
.sec-opts h4 { margin-bottom: 7px; }
.sec-paper { height: 120px; padding-top: 16px; }
.sec-btns { height: 86px; padding-top: 15px; display: flex; flex-direction: column; gap: 3px; }
.prow { height: 30px; display: flex; align-items: center; position: relative; }
.prow input { width: 15px; height: 15px; margin: 0 8px 3px 0; flex: none; }
.prow label { font-size: 14.300px; margin-bottom: 2px; }
.grid-ctl { position: absolute; left: 125px; top: 1px; display: flex; align-items: center; }
.pt-input { width: 60px; height: 26px; background: #fff; border: 1px solid #ccc; border-radius: 4px; color: #333; font-size: 14px; text-align: right; line-height: 24px; padding-right: 3px; }
.spinner { width: 15px; height: 26px; border: 1px solid #ccc; border-radius: 3px; display: flex; flex-direction: column; align-items: center; justify-content: center; gap: 4px; margin-left: 1px; }
.spinner svg { width: 8px; height: 5px; fill: #aaa; }
.swatch-btn { width: 57px; height: 27px; margin-left: 5px; border: 1px solid #888; border-radius: 5px; background: #eee; padding: 4px 4px; display: flex; }
.swatch { flex: 1; background: #ccc; border: 1px solid #222; }
.change { position: absolute; left: 130px; top: 1px; width: 70px; height: 26px; background: #eee; border: 1px solid #888; border-radius: 5px; font: 14.300px "Open Sans", sans-serif; color: #555; padding: 0; }
.paper { display: block; width: 256px; height: 22px; margin-top: 8px; font: 14.500px "Liberation Sans", sans-serif; color: #111; background: #fff; border: 1px solid #999; border-radius: 4px; }
.radios { display: flex; align-items: center; margin-top: 12px; height: 24px; padding-left: 11px; font-size: 14.300px; }
.radios input { width: 15px; height: 15px; margin: 0 9px 4px 0; }
.radios label { margin-right: 11px; margin-bottom: 2px; }
.wide { width: 262px; height: 24px; background: #eee; border: 1px solid #888; border-radius: 2px; font: 15px "Liberation Sans", sans-serif; color: #222; padding: 0; }

/* Windows taskbar */
.taskbar { flex: 1; background: #d2d2d2; display: flex; align-items: stretch; color: #111; }
.start { width: 61px; display: flex; align-items: center; justify-content: center; background: #d0d0d0; }
.start svg { width: 20px; height: 20px; fill: #000; }
.tsearch { width: 429px; background: #fff; border-top: 1px solid #c8c8c8; display: flex; align-items: center; padding-left: 14px; font-size: 17.800px; color: #333; gap: 13px; }
.tsearch svg { width: 22px; height: 22px; }
.tslot { width: 62px; display: flex; align-items: center; justify-content: center; }
.tslot svg { width: 24px; height: 24px; }
.tslot-on { background: #e0e0e0; border-bottom: 3px solid #0a6fc9; padding-top: 3px; }
.tslot-on svg { width: 28px; height: 32px; }
.chrome-h { font: 700 10px "Open Sans", sans-serif; fill: #cfe3f7; text-anchor: middle; }
.tray { margin-left: auto; display: flex; align-items: center; padding-right: 30px; font-size: 17px; }
.t-weather { width: 27px; height: 34px; }
.t-weather-txt { margin-left: 12px; white-space: nowrap; }
.t-up { width: 16px; height: 10px; margin-left: 22px; fill: none; stroke: #111; stroke-width: 1.200; }
.t-ic { width: 14px; height: 24px; margin-left: 14px; }
.t-ic2 { width: 20px; height: 26px; margin-left: 13px; }
.t-ic3 { width: 20px; height: 18px; margin-left: 9px; }
.t-ic4 { width: 18px; height: 16px; margin-left: 12px; }
.t-ic5 { width: 18px; height: 20px; margin-left: 13px; }
.clock { display: flex; flex-direction: column; align-items: center; font-size: 14px; line-height: 22px; margin-left: 17px; width: 64px; }
.t-note { width: 20px; height: 24px; margin-left: 24px; }
```
